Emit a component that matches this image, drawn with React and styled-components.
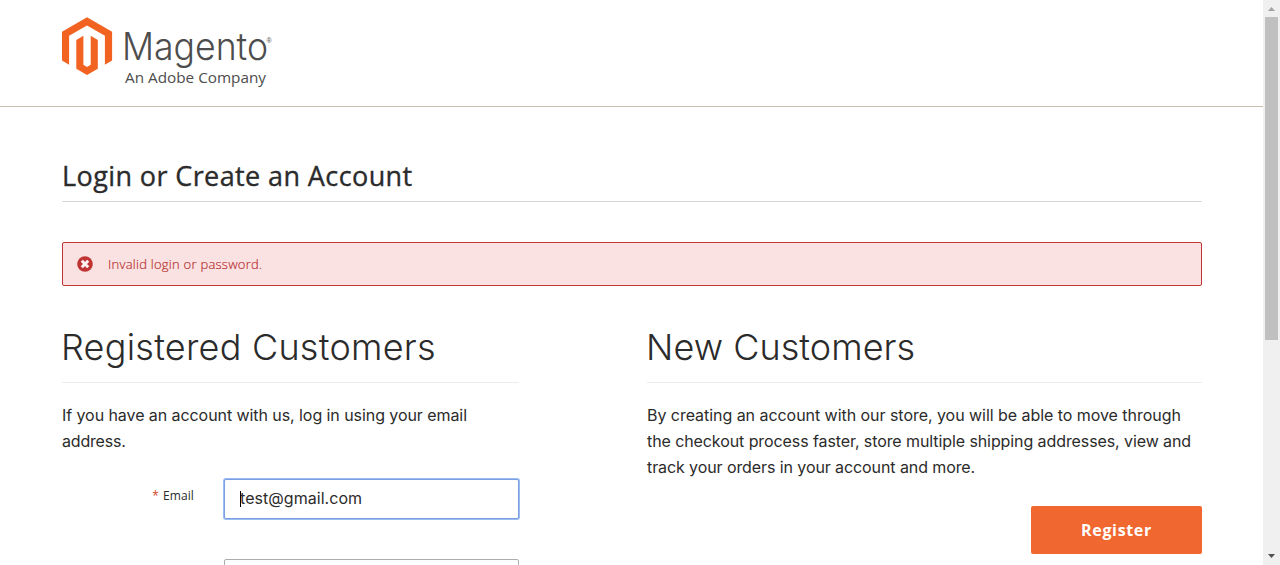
import React from "react";
import styled, { createGlobalStyle } from "styled-components";

const graphik = `Inter, "Liberation Sans", sans-serif`;

const GlobalStyle = createGlobalStyle`
  * { box-sizing: border-box; }
  body { margin: 0; background: #fff; color: #2b2b2b; overflow: hidden; font-family: "Open Sans", sans-serif; }
`;
const Screen = styled.div`
  display: flex;
  width: 1280px;
  height: 565px;
  overflow: hidden;
`;
const Page = styled.div`
  flex: 1;
  min-width: 0;
  height: 565px;
  overflow: hidden;
`;
const Header = styled.header`
  height: 107px;
  padding: 12px 61px 0 58px;
  border-bottom: 1px solid #c8c1b3;
`;
const LogoSvg = styled.svg`
  display: block;
`;
const Main = styled.main`
  padding: 50px 61px 0 62px;
`;
const PageTitle = styled.h1`
  margin: 0;
  height: 45px;
  line-height: 37px;
  border-bottom: 1px solid #d6d6d6;
  font-size: 27px;
  font-weight: 500;
  letter-spacing: 0.4px;
  -webkit-text-stroke: 0.35px #2b2b2b;
  white-space: nowrap;
`;
const Alert = styled.div`
  display: flex;
  align-items: center;
  gap: 15px;
  height: 44px;
  margin-top: 40px;
  padding-left: 14px;
  border: 1px solid #c33434;
  border-radius: 2px;
  background: #fbe2e2;
  color: #b83232;
  font-size: 13px;
  font-weight: 300;
`;
const AlertText = styled.span`
  letter-spacing: 0.25px;
  -webkit-text-stroke: 0.2px #b83232;
`;
const Columns = styled.div`
  display: flex;
  justify-content: space-between;
  margin-top: 37px;
`;
const Column = styled.section`
  width: ${(p) => p.$width}px;
`;
const ColumnTitle = styled.h2`
  margin: 0;
  height: 60px;
  line-height: 48px;
  border-bottom: 1px solid #ececec;
  font-family: ${graphik};
  font-size: 36px;
  font-weight: 300;
  letter-spacing: ${(p) => p.$spacing}px;
  text-indent: -1px;
  white-space: nowrap;
`;
const Copy = styled.p`
  margin: 19px 0 0;
  font-family: ${graphik};
  font-size: 16px;
  line-height: 26px;
  white-space: nowrap;
`;
const Line = styled.span`
  display: block;
  letter-spacing: ${(p) => p.$spacing}px;
`;
const Field = styled.div`
  display: flex;
  justify-content: flex-end;
  margin-top: ${(p) => p.$top}px;
`;
const Label = styled.label`
  margin-right: 30px;
  padding-top: 8px;
  font-size: 12px;
  line-height: 17px;
  letter-spacing: 0.1px;
`;
const Required = styled.span`
  margin-right: 4px;
  color: #d4442a;
`;
const InputWrap = styled.div`
  position: relative;
  width: 295px;
  height: 40px;
`;
const Input = styled.input`
  width: 100%;
  height: 100%;
  padding: 0 15px 2px;
  border: 1px solid ${(p) => (p.$active ? "#7c9fe0" : "#adadad")};
  border-radius: 2px;
  outline: none;
  box-shadow: ${(p) => (p.$active ? "0 0 0 1px #9bbcf3" : "none")};
  color: #2b2b2b;
  font-family: ${graphik};
  font-size: 16px;
  letter-spacing: 0.05px;
`;
const Caret = styled.span`
  position: absolute;
  left: 16px;
  top: 12px;
  width: 1px;
  height: 16px;
  background: #000;
`;
const Register = styled.button`
  display: block;
  width: 171px;
  height: 48px;
  margin: 26px 0 0 auto;
  padding: 0;
  border: 0;
  border-radius: 2px;
  background: #f0672f;
  color: #fff;
  font-family: "Open Sans", sans-serif;
  font-size: 16px;
  font-weight: 700;
  letter-spacing: 0.65px;
`;
const Scrollbar = styled.div`
  display: flex;
  flex-direction: column;
  align-items: center;
  justify-content: space-between;
  width: 17px;
  height: 565px;
  background: #f0f0f0;
`;
const ScrollTop = styled.div`
  display: flex;
  flex-direction: column;
  align-items: center;
`;
const Thumb = styled.div`
  width: 13px;
  height: 323px;
  background: #c0c0c0;
`;
const Arrow = styled.svg`
  display: block;
`;

function Logo() {
  return (
    <LogoSvg width="220" height="80" viewBox="58 12 220 80">
      <g fill="#f26322">
        <path d="M87 17.2 112.1 31.7V60.6L104.9 64.7V35.8L87 25.5 69.1 35.8V64.7L62 60.6V31.7Z" />
        <path d="M90.7 35.7 97.8 39.9V68.8L87 75 76.3 68.8V39.9L83.4 35.7V64.8L87 66.9 90.7 64.8Z" />
      </g>
      <g fill="#4d4d4d">
        <text x="122" y="60" fontFamily="Inter, sans-serif" fontWeight="300" fontSize="37.5" textLength="146" lengthAdjust="spacingAndGlyphs">Magento</text>
        <text x="266.6" y="43.3" fontFamily="Liberation Sans, sans-serif" fontSize="7">®</text>
        <text x="125" y="83" fontFamily="Open Sans, sans-serif" fontSize="15.2" textLength="141" lengthAdjust="spacingAndGlyphs">An Adobe Company</text>
      </g>
    </LogoSvg>
  );
}

function ErrorIcon() {
  return (
    <svg width="16" height="16" viewBox="0 0 16 16">
      <circle cx="8" cy="8" r="7.8" fill="#c03434" />
      <path d="M4.8 4.8l6.4 6.4M11.2 4.8l-6.4 6.4" stroke="#fff3f3" strokeWidth="3" />
    </svg>
  );
}

export default function App() {
  return (
    <Screen>
      <GlobalStyle />
      <Page>
        <Header><Logo /></Header>
        <Main>
          <PageTitle>Login or Create an Account</PageTitle>
          <Alert>
            <ErrorIcon />
            <AlertText>Invalid login or password.</AlertText>
          </Alert>
          <Columns>
            <Column $width={457}>
              <ColumnTitle $spacing={0.25}>Registered Customers</ColumnTitle>
              <Copy>
                <Line $spacing={-0.07}>If you have an account with us, log in using your email</Line>
                <Line $spacing={-0.2}>address.</Line>
              </Copy>
              <Field $top={25}>
                <Label htmlFor="email"><Required>*</Required>Email</Label>
                <InputWrap>
                  <Input id="email" defaultValue="test@gmail.com" $active />
                  <Caret />
                </InputWrap>
              </Field>
              <Field $top={40}>
                <InputWrap><Input type="password" /></InputWrap>
              </Field>
            </Column>
            <Column $width={555}>
              <ColumnTitle $spacing={0.05}>New Customers</ColumnTitle>
              <Copy>
                <Line $spacing={-0.045}>By creating an account with our store, you will be able to move through</Line>
                <Line $spacing={-0.09}>the checkout process faster, store multiple shipping addresses, view and</Line>
                <Line $spacing={-0.09}>track your orders in your account and more.</Line>
              </Copy>
              <Register type="button">Register</Register>
            </Column>
          </Columns>
        </Main>
      </Page>
      <Scrollbar>
        <ScrollTop>
          <Arrow width="17" height="17" viewBox="0 0 17 17"><path d="M5 11h7L8.5 7Z" fill="#a3a3a3" /></Arrow>
          <Thumb />
        </ScrollTop>
        <Arrow width="17" height="17" viewBox="0 0 17 17"><path d="M5 6h7L8.5 10Z" fill="#505050" /></Arrow>
      </Scrollbar>
    </Screen>
  );
}
